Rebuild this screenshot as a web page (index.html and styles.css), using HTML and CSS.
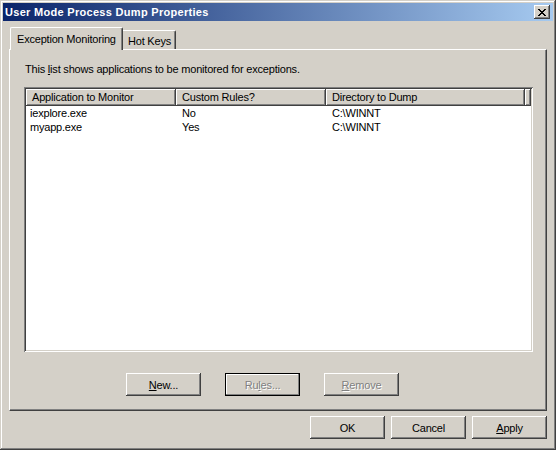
FILE: index.html
```html
<!DOCTYPE html>
<html>
<head>
<meta charset="utf-8">
<title>User Mode Process Dump Properties</title>
<link rel="stylesheet" href="styles.css">
</head>
<body>
<div class="window">
  <div class="titlebar">
    <span class="title">User Mode Process Dump Properties</span>
    <button class="close" aria-label="Close">
      <svg width="8" height="7" viewBox="0 0 8 7" shape-rendering="crispEdges"><path fill="#000" d="M0 0h2v1H0zM6 0h2v1H6zM1 1h2v1H1zM5 1h2v1H5zM2 2h4v1H2zM3 3h2v1H3zM2 4h4v1H2zM1 5h2v1H1zM5 5h2v1H5zM0 6h2v1H0zM6 6h2v1H6z"/></svg>
    </button>
  </div>
  <div class="content">
    <div class="tabs">
      <div class="tab active">Exception Monitoring</div>
      <div class="tab other">Hot Keys</div>
    </div>
    <div class="panel">
      <p class="desc">This <u>l</u>ist shows applications to be monitored for exceptions.</p>
      <div class="list">
        <div class="header">
          <div class="hcell c1">Application to Monitor</div>
          <div class="hcell c2">Custom Rules?</div>
          <div class="hcell c3">Directory to Dump</div>
          <div class="hcell rest"></div>
        </div>
        <div class="row">
          <span class="cell c1 first">iexplore.exe</span>
          <span class="cell c2">No</span>
          <span class="cell c3">C:\WINNT</span>
        </div>
        <div class="row">
          <span class="cell c1 first">myapp.exe</span>
          <span class="cell c2">Yes</span>
          <span class="cell c3">C:\WINNT</span>
        </div>
      </div>
      <div class="panel-buttons">
        <button class="btn"><u>N</u>ew...</button>
        <button class="btn default disabled">Ru<u>l</u>es...</button>
        <button class="btn disabled"><u>R</u>emove</button>
      </div>
    </div>
    <div class="dialog-buttons">
      <button class="btn">OK</button>
      <button class="btn">Cancel</button>
      <button class="btn"><u>A</u>pply</button>
    </div>
  </div>
</div>
</body>
</html>
```
FILE: styles.css
```css
* { box-sizing: border-box; }
html, body { margin: 0; padding: 0; }
body {
  width: 556px;
  height: 450px;
  overflow: hidden;
  background: #d4d0c8;
  font-family: "Liberation Sans", Arial, sans-serif;
  font-size: 11px;
  letter-spacing: -0.2px;
  color: #000;
}
.window {
  width: 556px;
  height: 450px;
  padding: 3px;
  background: #d4d0c8;
  box-shadow: inset -1px -1px #404040, inset 1px 1px #d4d0c8, inset -2px -2px #808080, inset 2px 2px #fff;
  display: flex;
  flex-direction: column;
}
.titlebar {
  height: 18px;
  flex: none;
  background: linear-gradient(to right, #0a246a, #a6caf0);
  display: flex;
  align-items: center;
  justify-content: space-between;
  padding: 0 3px 0 2px;
}
.title {
  color: #fff;
  font-weight: bold;
  font-size: 11px;
  letter-spacing: 0.3px;
  line-height: 13px;
  padding-top: 1px;
}
.close {
  width: 16px;
  height: 14px;
  padding: 0;
  border: 0;
  background: #d4d0c8;
  box-shadow: inset -1px -1px #404040, inset 1px 1px #fff, inset -2px -2px #808080, inset 2px 2px #d4d0c8;
  display: flex;
  align-items: center;
  justify-content: center;
}
.close svg { display: block; }
.content {
  flex: 1;
  padding: 6px 6px 0 6px;
  display: flex;
  flex-direction: column;
}
.tabs {
  height: 22px;
  flex: none;
  display: flex;
  align-items: flex-end;
  padding-left: 1px;
  position: relative;
  z-index: 1;
}
.tab {
  background: #d4d0c8;
  border-left: 1px solid #fff;
  border-top: 1px solid #fff;
  border-right: 1px solid #404040;
  border-radius: 2px 2px 0 0;
  box-shadow: inset -1px 0 #808080;
  line-height: 13px;
  white-space: nowrap;
}
.tab.active {
  width: 113px;
  height: 23px;
  margin-bottom: -1px;
  padding: 5px 0 0 6px;
  position: relative;
  z-index: 2;
}
.tab.other {
  width: 55px;
  height: 19px;
  margin-left: -2px;
  padding: 4px 0 0 6px;
}
.panel {
  height: 362px;
  flex: none;
  border: 1px solid;
  border-color: #fff #404040 #404040 #fff;
  box-shadow: inset -1px -1px #808080;
  padding: 13px 13px 0 14px;
  display: flex;
  flex-direction: column;
}
.desc {
  margin: 0 0 0 1px;
  line-height: 13px;
  height: 13px;
}
.list {
  margin-top: 11px;
  height: 265px;
  background: #fff;
  padding: 2px;
  box-shadow: inset 1px 1px #808080, inset -1px -1px #fff, inset 2px 2px #404040, inset -2px -2px #d4d0c8;
}
.header {
  display: flex;
  height: 17px;
}
.hcell {
  height: 17px;
  background: #d4d0c8;
  box-shadow: inset -1px -1px #404040, inset 1px 1px #fff, inset -2px -2px #808080;
  padding: 2px 0 0 6px;
  line-height: 13px;
  white-space: nowrap;
  overflow: hidden;
}
.c1 { width: 150px; flex: none; }
.c2 { width: 150px; flex: none; }
.c3 { width: 199px; flex: none; }
.rest { flex: 1; }
.row {
  display: flex;
  height: 14px;
  line-height: 14px;
}
.cell {
  padding-left: 6px;
  white-space: nowrap;
}
.cell.first { padding-left: 4px; }
.panel-buttons {
  display: flex;
  gap: 24px;
  margin-top: 21px;
  padding-left: 102px;
}
.btn {
  width: 75px;
  height: 23px;
  padding: 0;
  border: 0;
  background: #d4d0c8;
  font-family: "Liberation Sans", Arial, sans-serif;
  font-size: 11px;
  letter-spacing: -0.2px;
  color: #000;
  box-shadow: inset -1px -1px #404040, inset 1px 1px #fff, inset -2px -2px #808080, inset 2px 2px #d4d0c8;
}
.btn.default {
  border: 1px solid #000;
  box-shadow: inset -1px -1px #808080, inset 1px 1px #fff;
}
.btn.disabled {
  color: #808080;
  text-shadow: 1px 1px #fff;
}
.dialog-buttons {
  display: flex;
  justify-content: flex-end;
  gap: 6px;
  margin-top: 5px;
}
```
